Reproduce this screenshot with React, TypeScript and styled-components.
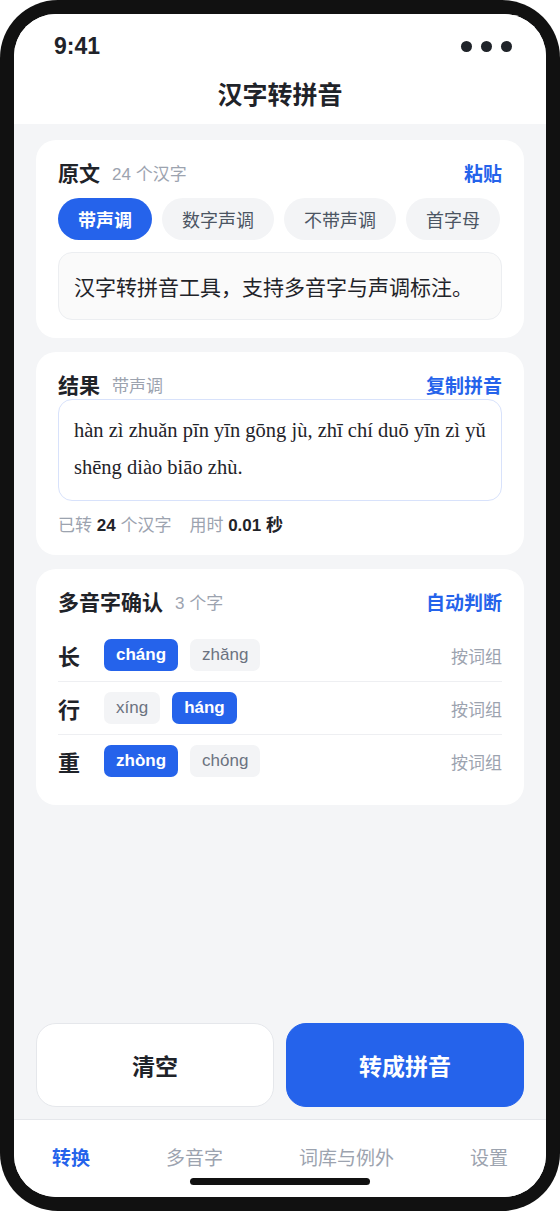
import React from "react";
import styled, { createGlobalStyle } from "styled-components";

const GlobalStyle = createGlobalStyle`
  html, body {
    margin: 0;
    padding: 0;
    background: #fff;
  }
  body {
    font-family: "Liberation Sans", "Noto Sans CJK SC", sans-serif;
    color: #1f2937;
  }
  * {
    box-sizing: border-box;
  }
`;

type Reading = { py: string; active?: boolean };
type Poly = { ch: string; readings: Reading[] };

const modes = ["带声调", "数字声调", "不带声调", "首字母"];

const polys: Poly[] = [
  { ch: "长", readings: [{ py: "cháng", active: true }, { py: "zhăng" }] },
  { ch: "行", readings: [{ py: "xíng" }, { py: "háng", active: true }] },
  { ch: "重", readings: [{ py: "zhòng", active: true }, { py: "chóng" }] },
];

const tabs = ["转换", "多音字", "词库与例外", "设置"];

const App = () => {
  return (
    <>
      <GlobalStyle />
      <Phone>
        <Screen>
          <TopBar>
            <StatusBar>
              <Time>9:41</Time>
              <Dots>
                <Dot />
                <Dot />
                <Dot />
              </Dots>
            </StatusBar>
            <Title>汉字转拼音</Title>
          </TopBar>

          <Content>
            <Card>
              <CardHeader>
                <CardTitle>原文</CardTitle>
                <CardSub>24 个汉字</CardSub>
                <CardAction>粘贴</CardAction>
              </CardHeader>
              <Modes>
                {modes.map((m, i) => (
                  <ModeChip key={m} $active={i === 0}>
                    {m}
                  </ModeChip>
                ))}
              </Modes>
              <SourceBox>汉字转拼音工具，支持多音字与声调标注。</SourceBox>
            </Card>

            <Card>
              <CardHeader>
                <CardTitle>结果</CardTitle>
                <CardSub>带声调</CardSub>
                <CardAction>复制拼音</CardAction>
              </CardHeader>
              <ResultBox>
                hàn zì zhuǎn pīn yīn gōng jù, zhī chí duō yīn zì yǔ shēng diào
                biāo zhù.
              </ResultBox>
              <Stats>
                <span>
                  已转 <b>24</b> 个汉字
                </span>
                <span>
                  用时 <b>0.01 秒</b>
                </span>
              </Stats>
            </Card>

            <Card>
              <CardHeader>
                <CardTitle>多音字确认</CardTitle>
                <CardSub>3 个字</CardSub>
                <CardAction>自动判断</CardAction>
              </CardHeader>
              <PolyList>
                {polys.map((p) => (
                  <PolyRow key={p.ch}>
                    <PolyChar>{p.ch}</PolyChar>
                    {p.readings.map((r) => (
                      <ReadingChip key={r.py} $active={r.active}>
                        {r.py}
                      </ReadingChip>
                    ))}
                    <PolyHint>按词组</PolyHint>
                  </PolyRow>
                ))}
              </PolyList>
            </Card>
          </Content>

          <Actions>
            <ActionButton>清空</ActionButton>
            <ActionButton $primary>转成拼音</ActionButton>
          </Actions>

          <TabBar>
            <Tabs>
              {tabs.map((t, i) => (
                <Tab key={t} $active={i === 0}>
                  {t}
                </Tab>
              ))}
            </Tabs>
            <HomeIndicator />
          </TabBar>
        </Screen>
      </Phone>
    </>
  );
};

export default App;

const Phone = styled.div`
  width: 560px;
  height: 1211px;
  padding: 14px;
  background: #111;
  border-radius: 58px;
`;

const Screen = styled.div`
  height: 100%;
  display: flex;
  flex-direction: column;
  background: #f4f5f7;
  border-radius: 42px;
  overflow: hidden;
`;

const TopBar = styled.header`
  background: #fff;
  height: 110px;
  display: flex;
  flex-direction: column;
`;

const StatusBar = styled.div`
  height: 52px;
  padding: 12px 34px 0 40px;
  display: flex;
  align-items: center;
  justify-content: space-between;
`;

const Time = styled.span`
  font-size: 23px;
  font-weight: 700;
  color: #1f2329;
`;

const Dots = styled.div`
  display: flex;
  gap: 9px;
`;

const Dot = styled.span`
  width: 11px;
  height: 11px;
  border-radius: 50%;
  background: #1f2329;
`;

const Title = styled.h1`
  margin: 0;
  padding-top: 11px;
  text-align: center;
  font-size: 25px;
  line-height: 36px;
  font-weight: 700;
  color: #1f2329;
`;

const Content = styled.main`
  flex: 1;
  padding: 16px 22px;
  display: flex;
  flex-direction: column;
  gap: 14px;
`;

const Card = styled.section`
  background: #fff;
  border-radius: 20px;
  padding: 20px 22px 18px;
  display: flex;
  flex-direction: column;
`;

const CardHeader = styled.div`
  display: flex;
  align-items: center;
  height: 24px;
`;

const CardTitle = styled.h2`
  margin: 0;
  font-size: 21px;
  font-weight: 700;
  color: #1f2329;
`;

const CardSub = styled.span`
  margin-left: 12px;
  font-size: 17px;
  color: #9ca3af;
`;

const CardAction = styled.span`
  margin-left: auto;
  font-size: 19px;
  font-weight: 700;
  color: #2563eb;
`;

const Modes = styled.div`
  display: flex;
  gap: 10px;
  margin-top: 14px;
`;

const ModeChip = styled.span<{ $active?: boolean }>`
  height: 42px;
  padding: 0 20px;
  display: flex;
  align-items: center;
  border-radius: 21px;
  font-size: 18px;
  font-weight: ${(p) => (p.$active ? 700 : 400)};
  background: ${(p) => (p.$active ? "#2563eb" : "#f3f4f6")};
  color: ${(p) => (p.$active ? "#fff" : "#4b5563")};
`;

const SourceBox = styled.div`
  margin-top: 12px;
  height: 68px;
  padding: 0 15px;
  display: flex;
  align-items: center;
  background: #fafafa;
  border: 1px solid #eceef1;
  border-radius: 14px;
  font-size: 21px;
  color: #1f2329;
`;

const ResultBox = styled.div`
  margin-top: 3px;
  padding: 12px 15px 14px;
  border: 1px solid #d8e2fb;
  border-radius: 14px;
  font-family: "Liberation Serif", "DejaVu Serif", serif;
  font-size: 20.5px;
  line-height: 37px;
  color: #1f2329;
`;

const Stats = styled.div`
  margin-top: 14px;
  display: flex;
  gap: 18px;
  font-size: 17px;
  line-height: 22px;
  color: #9ca3af;

  b {
    color: #1f2329;
    font-weight: 700;
  }
`;

const PolyList = styled.div`
  margin-top: 16px;
  display: flex;
  flex-direction: column;
`;

const PolyRow = styled.div`
  display: flex;
  align-items: center;
  gap: 12px;
  padding: 10px 0;
  border-bottom: 1px solid #eeeff2;

  &:last-child {
    border-bottom: none;
  }
`;

const PolyChar = styled.span`
  width: 34px;
  font-size: 22px;
  font-weight: 700;
  color: #1f2329;
`;

const ReadingChip = styled.span<{ $active?: boolean }>`
  height: 32px;
  padding: 0 12px;
  display: flex;
  align-items: center;
  border-radius: 7px;
  font-size: 17px;
  font-weight: ${(p) => (p.$active ? 700 : 400)};
  background: ${(p) => (p.$active ? "#2563eb" : "#f3f4f6")};
  color: ${(p) => (p.$active ? "#fff" : "#6b7280")};
`;

const PolyHint = styled.span`
  margin-left: auto;
  font-size: 17px;
  color: #9ca3af;
`;

const Actions = styled.div`
  display: flex;
  gap: 12px;
  padding: 0 22px 12px;
`;

const ActionButton = styled.button<{ $primary?: boolean }>`
  flex: 1;
  height: 84px;
  border-radius: 20px;
  font-family: inherit;
  font-size: 23px;
  font-weight: 700;
  border: 1px solid ${(p) => (p.$primary ? "#2563eb" : "#e5e7eb")};
  background: ${(p) => (p.$primary ? "#2563eb" : "#fff")};
  color: ${(p) => (p.$primary ? "#fff" : "#1f2329")};
`;

const TabBar = styled.nav`
  height: 78px;
  background: #fff;
  border-top: 1px solid #e5e7eb;
  display: flex;
  flex-direction: column;
  align-items: center;
`;

const Tabs = styled.div`
  align-self: stretch;
  display: flex;
  justify-content: space-between;
  padding: 27px 38px 0;
`;

const Tab = styled.span<{ $active?: boolean }>`
  font-size: 19px;
  line-height: 24px;
  font-weight: ${(p) => (p.$active ? 700 : 400)};
  color: ${(p) => (p.$active ? "#2563eb" : "#9ca3af")};
`;

const HomeIndicator = styled.div`
  margin-top: 7px;
  width: 180px;
  height: 7px;
  border-radius: 4px;
  background: #111;
`;
